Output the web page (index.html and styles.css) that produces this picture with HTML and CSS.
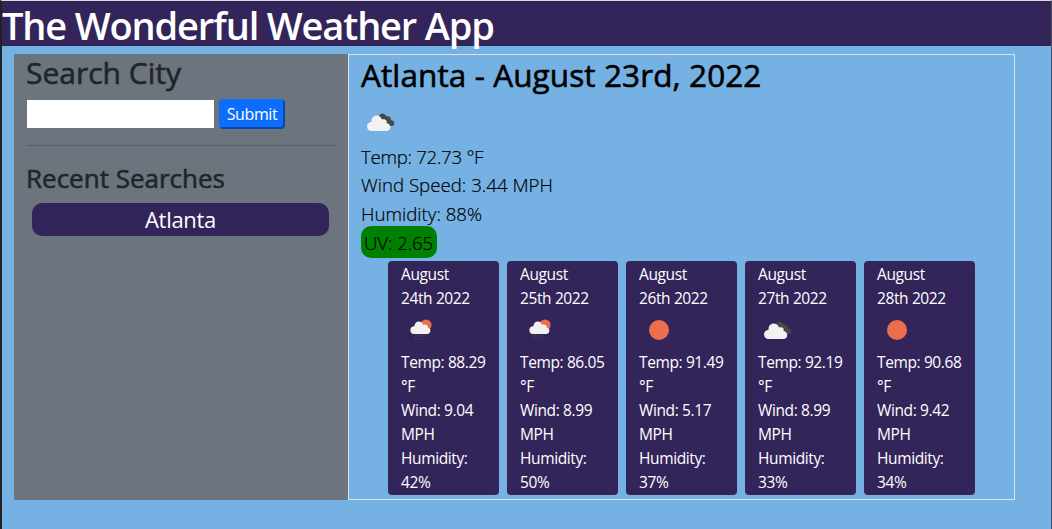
FILE: index.html
```html
<!DOCTYPE html>
<html lang="en">
<head>
<meta charset="utf-8">
<title>The Wonderful Weather App</title>
<link rel="stylesheet" href="styles.css">
</head>
<body>
<svg width="0" height="0" class="defs">
  <symbol id="clouds" viewBox="0 0 30 20">
    <path fill="#484848" d="M13 8V4.500C13.500 0.500 18.500 0.300 20.500 4.500C23 3.800 25 5.500 25 8C29.500 8.500 29.500 14 25 14H20Z"/>
    <path fill="#f2f2f2" d="M5.500 19A4.500 4.500 0 0 1 5.500 10C5 2.500 14 1.500 16 7.500C19 6.500 21.500 8.500 20.500 11C25.500 11.500 25.500 19 20.500 19Z"/>
  </symbol>
  <symbol id="rain" viewBox="0 0 22 22">
    <circle cx="16" cy="6" r="5.600" fill="#ec6e4c"/>
    <path fill="#f2f2f2" d="M4.200 15A3.900 3.900 0 0 1 4.400 7.200C4.600 1.200 11.800 1 13.200 5.900C15.800 4.800 18.300 6.700 17.700 8.600C21.600 9.300 21.200 15 17.300 15Z"/>
    <path stroke="#484848" stroke-width="1.200" stroke-dasharray="2 1" d="M6.300 16l-1.300 4M9.600 16l-1.500 5M13 16l-1.500 5" fill="none"/>
  </symbol>
  <symbol id="sun" viewBox="0 0 22 22"><circle cx="11" cy="11" r="10" fill="#ec6e4c"/></symbol>
</svg>
<div class="page">
  <header class="header"><h1 class="title">The Wonderful Weather App</h1></header>
  <div class="content">
    <aside class="sidebar">
      <h2 class="search-title">Search City</h2>
      <form class="search"><input class="city" type="text" aria-label="City"><button class="submit" type="button">Submit</button></form>
      <hr class="rule">
      <h3 class="recent-title">Recent Searches</h3>
      <button class="recent">Atlanta</button>
    </aside>
    <main class="weather">
      <h2 class="place">Atlanta - August 23rd, 2022</h2>
      <svg class="today-icon"><use href="#clouds"/></svg>
      <div class="details">
        <p class="temp">Temp: 72.73 °F</p>
        <p>Wind Speed: 3.44 MPH</p>
        <p>Humidity: 88%</p>
      </div>
      <div class="uv">UV: 2.65</div>
      <div class="forecast">
        <section class="card"><p>August<br>24th 2022</p><div class="icon"><svg class="rain"><use href="#rain"/></svg></div><p>Temp: 88.29<br>°F<br>Wind: 9.04<br>MPH<br>Humidity:<br>42%</p></section>
        <section class="card"><p>August<br>25th 2022</p><div class="icon"><svg class="rain"><use href="#rain"/></svg></div><p>Temp: 86.05<br>°F<br>Wind: 8.99<br>MPH<br>Humidity:<br>50%</p></section>
        <section class="card"><p>August<br>26th 2022</p><div class="icon"><svg class="sun"><use href="#sun"/></svg></div><p>Temp: 91.49<br>°F<br>Wind: 5.17<br>MPH<br>Humidity:<br>37%</p></section>
        <section class="card"><p>August<br>27th 2022</p><div class="icon"><svg class="clouds"><use href="#clouds"/></svg></div><p>Temp: 92.19<br>°F<br>Wind: 8.99<br>MPH<br>Humidity:<br>33%</p></section>
        <section class="card"><p>August<br>28th 2022</p><div class="icon"><svg class="sun"><use href="#sun"/></svg></div><p>Temp: 90.68<br>°F<br>Wind: 9.42<br>MPH<br>Humidity:<br>34%</p></section>
      </div>
    </main>
  </div>
</div>
</body>
</html>
```
FILE: styles.css
```css
* { box-sizing: border-box; }
body, h1, h2, h3, p, form { margin: 0; }
body { font-family: "Open Sans", "Noto Sans", sans-serif; color: #212529; overflow: hidden; }
svg { display: block; }
.defs { position: absolute; }
.page { height: 529px; background: #75b2e3; border-left: 2px solid #202124; border-right: 1px solid #4d5560; border-top: 1px solid #d9dadd; }
.header { height: 45px; background: #33255a; }
h1, h2, h3 { font-weight: 600; white-space: nowrap; }
.title { color: #fff; font-size: 38px; line-height: 48px; letter-spacing: -1.15px; }
.content { display: flex; width: 1001px; height: 446px; margin: 8px 0 0 12px; }
.sidebar { width: 334px; padding: 0 12px; background: #6c757d; }
.search-title, .recent-title, .place { font-weight: 400; -webkit-text-stroke: 0.6px currentColor; }
.search-title { font-size: 30px; line-height: 37px; height: 45px; }
.search { display: flex; align-items: center; gap: 5px; height: 30px; padding-left: 1px; }
.city { width: 187px; height: 28px; border: 0; padding: 0 4px; background: #fff; }
.submit { width: 66px; height: 30px; padding: 0; border: 2px outset #0d6efd; border-radius: 4px; background: #0d6efd; color: #fff; font: 16px/24px "Open Sans", sans-serif; letter-spacing: -0.4px; }
.rule { height: 1px; margin: 16px 0; border: 0; background: #596068; }
.recent-title { font-size: 26px; line-height: 33px; height: 41px; }
.recent { display: block; width: 297px; height: 33px; margin-left: 6px; padding: 0 0 1px; border: 0; border-radius: 10px; background: #33255a; color: #fff; font: 22px/32px "Open Sans", sans-serif; letter-spacing: -0.3px; }
.weather { width: 667px; padding-left: 12px; border: 1px solid #dee2e6; color: #000; }
.place { font-size: 31.5px; line-height: 40px; height: 57px; letter-spacing: 0.1px; }
.today-icon { width: 30px; height: 20px; margin-left: 5px; }
.details, .uv { font-size: 18.7px; font-weight: 300; -webkit-text-stroke: 0.2px currentColor; }
.details { padding-top: 10.5px; line-height: 28.5px; height: 94px; }
.temp { letter-spacing: -0.3px; }
.uv { width: 76px; height: 32px; padding-left: 3px; border-radius: 10px; background: green; line-height: 34px; letter-spacing: -0.1px; white-space: nowrap; }
.forecast { display: flex; gap: 8px; margin: 3px 0 0 27px; }
.card { width: 111px; height: 234px; padding: 1px 0 0 13px; border-radius: 4px; background: #33255a; color: #fff; font-size: 15.5px; line-height: 24px; white-space: nowrap; letter-spacing: -0.38px; }
.icon { height: 40px; padding: 9px 0 0 9px; }
.rain, .sun { width: 22px; height: 22px; }
.clouds { width: 30px; height: 20px; margin: 1px 0 0 -4px; }
```
